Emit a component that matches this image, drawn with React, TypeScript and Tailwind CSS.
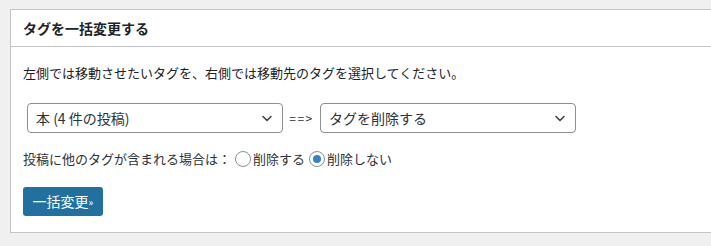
import React from "react"

const font = { fontFamily: '"Noto Sans CJK JP", "Noto Sans", sans-serif' }

function Chevron() {
  return (
    <svg width="16" height="16" viewBox="0 0 16 16" className="shrink-0">
      <path d="M4 6.5 L8 10.5 L12 6.5" fill="none" stroke="#3c434a" strokeWidth="1.6" strokeLinecap="round" strokeLinejoin="round" />
    </svg>
  )
}

function FakeSelect({ label }: { label: string }) {
  return (
    <div className="flex items-center justify-between w-[256px] h-[30px] border border-[#8c8f94] rounded-[4px] bg-white pl-[8px] pr-[7px] text-[14px] text-[#2c3338]">
      <span className="leading-none">{label}</span>
      <Chevron />
    </div>
  )
}

function Radio({ checked }: { checked?: boolean }) {
  return (
    <span className="inline-flex items-center justify-center w-[16px] h-[16px] rounded-full border border-[#8c8f94] bg-white">
      {checked && <span className="w-[8px] h-[8px] rounded-full bg-[#3582c4]" />}
    </span>
  )
}

export default function App() {
  return (
    <div className="w-[711px] h-[246px] overflow-hidden bg-[#f0f0f1] pt-[9px] pl-[10px]" style={font}>
      <div className="w-[720px] bg-white border border-[#c3c4c7] text-[#1d2327]">
        <h2 className="h-[37px] flex items-center px-[12px] text-[14px] font-bold border-b border-[#c3c4c7]">
          タグを一括変更する
        </h2>
        <div className="px-[12px] pt-[17px] pb-[16px]">
          <p className="text-[13px] leading-[18px] text-[#1d2327]">
            左側では移動させたいタグを、右側では移動先のタグを選択してください。
          </p>
          <div className="flex items-center mt-[21px] ml-[4px]">
            <FakeSelect label="本 (4 件の投稿)" />
            <span className="text-[12px] text-[#2c3338] w-[37px] text-center tracking-[1.5px]">==&gt;</span>
            <FakeSelect label="タグを削除する" />
          </div>
          <div className="flex items-center mt-[17px] text-[13px] leading-[18px] text-[#2c3338]">
            <span>投稿に他のタグが含まれる場合は：</span>
            <label className="flex items-center ml-[4px] gap-[2px]">
              <Radio />
              <span>削除する</span>
            </label>
            <label className="flex items-center ml-[4px] gap-[2px]">
              <Radio checked />
              <span>削除しない</span>
            </label>
          </div>
          <button className="mt-[19px] w-[80px] h-[29px] rounded-[3px] bg-[#21709f] text-white text-[14px] flex items-center justify-center">
            一括変更<span className="text-[10px]">»</span>
          </button>
        </div>
      </div>
    </div>
  )
}
